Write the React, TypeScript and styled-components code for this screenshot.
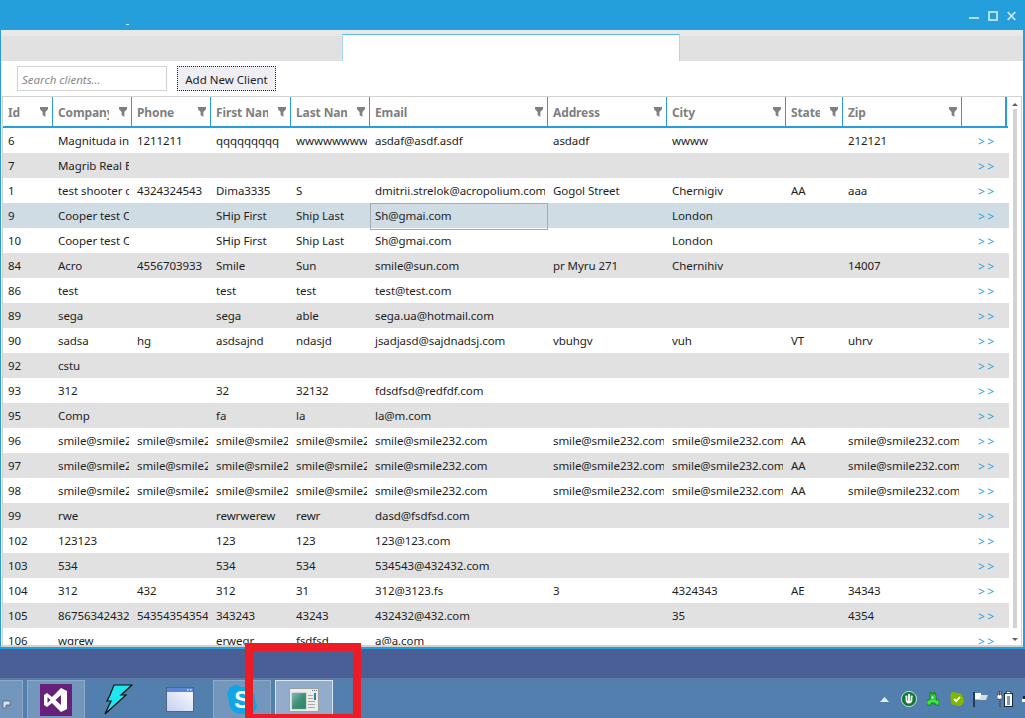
import React from 'react'
import styled, { createGlobalStyle } from 'styled-components'

const GlobalStyle = createGlobalStyle`
  html, body { margin: 0; padding: 0; overflow: hidden; }
  body { font-family: "Noto Sans", "Open Sans", "Liberation Sans", sans-serif; }
`

const COLUMNS = '50px 79px 79px 80px 79px 178px 119px 119px 57px 119px 47px'
const HEADER_COLUMNS = '50px 79px 79px 80px 79px 178px 119px 119px 57px 119px 45px'
const BLUE = '#259fdb'

const Desktop = styled.div`
  position: relative;
  width: 1025px;
  height: 718px;
  display: flex;
  flex-direction: column;
  overflow: hidden;
  background: #4a5f96;
`

const Window = styled.div`
  height: 649px;
  flex: none;
  display: flex;
  flex-direction: column;
  box-sizing: border-box;
  background: ${BLUE};
  padding: 0 2px 2px 1px;
`

const TitleBar = styled.div`
  height: 30px;
  flex: none;
  box-sizing: border-box;
  position: relative;
  display: flex;
  justify-content: flex-end;
  align-items: center;
  gap: 9px;
  padding: 2px 7px 0 0;
`

const TitleMark = styled.span`
  position: absolute;
  left: 125px;
  top: 24px;
  width: 3px;
  height: 1px;
  background: #d8eefa;
`

const Client = styled.div`
  flex: 1;
  min-height: 0;
  display: flex;
  flex-direction: column;
  background: #fff;
  border-bottom: 2px solid #d2d2d2;
`

const TabStrip = styled.div`
  height: 31px;
  flex: none;
  display: flex;
  padding-top: 4px;
  box-sizing: border-box;
  background: linear-gradient(#e8e8e8 0, #e8e8e8 6px, #e1e1e1 6px);
`

const ActiveTab = styled.div`
  width: 336px;
  margin-left: 341px;
  background: #fff;
  border-top: 1px solid #62b9e5;
  border-left: 1px solid #a8d8ef;
  border-right: 1px solid #a8d8ef;
`

const SearchRow = styled.div`
  height: 35px;
  flex: none;
  display: flex;
  gap: 10px;
  padding: 5px 0 0 16px;
  box-sizing: border-box;
`

const SearchInput = styled.div`
  width: 150px;
  height: 25px;
  box-sizing: border-box;
  border: 1px solid #d2d2d2;
  padding-left: 4px;
  font-size: 11.5px;
  font-style: italic;
  line-height: 25px;
  color: #8a8a8a;
`

const AddButton = styled.div`
  width: 99px;
  height: 25px;
  box-sizing: border-box;
  border: 1px dotted #222;
  background: #eeeef3;
  font-size: 11.5px;
  line-height: 25px;
  text-align: center;
  color: #222;
`

const GridArea = styled.div`
  flex: 1;
  min-height: 0;
  display: flex;
  margin: 0 1px;
  border-top: 1px solid #d2d2d2;
  border-left: 1px solid #d2d2d2;
  border-right: 1px solid #d2d2d2;
`

const Table = styled.div`
  width: 1006px;
  flex: none;
  overflow: hidden;
`

const HeaderRow = styled.div`
  display: grid;
  grid-template-columns: ${HEADER_COLUMNS};
  width: 1005px;
  box-sizing: border-box;
  height: 31px;
  border-bottom: 2px solid ${BLUE};
`

const HeaderCell = styled.div<{ $last?: boolean }>`
  position: relative;
  box-sizing: border-box;
  border-right: ${p => (p.$last ? 2 : 1)}px solid ${BLUE};
  padding: 7px 0 0 5px;
  font-size: 12px;
  font-weight: 700;
  letter-spacing: -0.12px;
  line-height: 17px;
  color: #7f7f7f;
`

const HeaderLabel = styled.div`
  margin-right: 22px;
  white-space: nowrap;
  overflow: hidden;
`

const FilterIcon = styled.svg`
  position: absolute;
  right: 4px;
  top: 10px;
  width: 8px;
  height: 10px;
`

const Row = styled.div<{ $tone: 'plain' | 'alt' | 'selected' }>`
  display: grid;
  grid-template-columns: ${COLUMNS};
  height: 25px;
  background: ${p => (p.$tone === 'alt' ? '#e1e1e1' : p.$tone === 'selected' ? '#d0dce4' : '#fff')};
`

const Cell = styled.div<{ $focused?: boolean }>`
  box-sizing: border-box;
  padding-left: ${p => (p.$focused ? 4 : 5)}px;
  margin-right: ${p => (p.$focused ? 0 : 3)}px;
  font-size: 11.5px;
  letter-spacing: -0.07px;
  line-height: ${p => (p.$focused ? 23 : 25)}px;
  color: #1e1e1e;
  white-space: nowrap;
  overflow: hidden;
  border: ${p => (p.$focused ? '1px solid #a3adb4' : 'none')};
`

const Arrows = styled.div`
  padding-left: 16px;
  font-size: 12px;
  letter-spacing: 2.5px;
  line-height: 27px;
  color: ${BLUE};
`

const ScrollBar = styled.div`
  width: 12px;
  flex: none;
  display: flex;
  flex-direction: column;
  align-items: center;
`

const ScrollThumb = styled.div`
  flex: 1;
  width: 4px;
  margin: 3px 0 10px;
  background: #d2d2d2;
`

const Arrow = styled.div<{ $down?: boolean }>`
  width: 0;
  height: 0;
  flex: none;
  margin-top: ${p => (p.$down ? 0 : 6)}px;
  margin-bottom: ${p => (p.$down ? 4 : 0)}px;
  border-left: 3px solid transparent;
  border-right: 3px solid transparent;
  border-bottom: ${p => (p.$down ? 'none' : '3px solid #606060')};
  border-top: ${p => (p.$down ? '3px solid #606060' : 'none')};
`

const Wallpaper = styled.div`
  height: 29px;
  flex: none;
`

const Taskbar = styled.div`
  flex: 1;
  display: flex;
  align-items: flex-start;
  position: relative;
  padding-top: 1px;
  box-sizing: border-box;
  background: #537fae;
  border-top: 1px solid #5a78a6;
`

const Tile = styled.div<{ $active?: boolean; $width?: number; $ml?: number }>`
  width: ${p => p.$width ?? 58}px;
  margin-left: ${p => p.$ml ?? 0}px;
  height: 39px;
  flex: none;
  box-sizing: border-box;
  display: flex;
  align-items: center;
  justify-content: center;
  position: relative;
  overflow: hidden;
  border: 1px solid ${p => (p.$active ? '#dbe5ef' : '#8dabc8')};
  background: ${p => (p.$active ? '#93acc9' : '#7397bc')};
`

const EdgeGlyph = styled.svg`
  position: absolute;
  left: 0;
  bottom: 8px;
`

const PlainTask = styled.div<{ $width: number }>`
  width: ${p => p.$width}px;
  height: 39px;
  flex: none;
  display: flex;
  align-items: center;
  justify-content: center;
`

const Tray = styled.div`
  position: absolute;
  right: 0;
  top: 12px;
  display: flex;
  align-items: center;
`

const TrayIcon = styled.svg<{ $ml: number }>`
  flex: none;
  display: block;
  margin-left: ${p => p.$ml}px;
`

const Highlight = styled.div`
  position: absolute;
  left: 245px;
  top: 643px;
  width: 116px;
  height: 75px;
  box-sizing: border-box;
  border: 8px solid #ed1c24;
  border-bottom-width: 4px;
`

const headers = ['Id', 'Company', 'Phone', 'First Name', 'Last Name', 'Email', 'Address', 'City', 'State', 'Zip', '']

const s = 'smile@smile232.com'
const rows: string[][] = [
  ['6', 'Magnituda inc', '1211211', 'qqqqqqqqq', 'wwwwwwwwww', 'asdaf@asdf.asdf', 'asdadf', 'wwww', '', '212121'],
  ['7', 'Magrib Real Estate', '', '', '', '', '', '', '', ''],
  ['1', 'test shooter co', '4324324543', 'Dima3335', 'S', 'dmitrii.strelok@acropolium.com', 'Gogol Street', 'Chernigiv', 'AA', 'aaa'],
  ['9', 'Cooper test Co', '', 'SHip First', 'Ship Last', 'Sh@gmai.com', '', 'London', '', ''],
  ['10', 'Cooper test Co', '', 'SHip First', 'Ship Last', 'Sh@gmai.com', '', 'London', '', ''],
  ['84', 'Acro', '4556703933', 'Smile', 'Sun', 'smile@sun.com', 'pr Myru 271', 'Chernihiv', '', '14007'],
  ['86', 'test', '', 'test', 'test', 'test@test.com', '', '', '', ''],
  ['89', 'sega', '', 'sega', 'able', 'sega.ua@hotmail.com', '', '', '', ''],
  ['90', 'sadsa', 'hg', 'asdsajnd', 'ndasjd', 'jsadjasd@sajdnadsj.com', 'vbuhgv', 'vuh', 'VT', 'uhrv'],
  ['92', 'cstu', '', '', '', '', '', '', '', ''],
  ['93', '312', '', '32', '32132', 'fdsdfsd@redfdf.com', '', '', '', ''],
  ['95', 'Comp', '', 'fa', 'la', 'la@m.com', '', '', '', ''],
  ['96', s, s, s, s, s, s, s, 'AA', s],
  ['97', s, s, s, s, s, s, s, 'AA', s],
  ['98', s, s, s, s, s, s, s, 'AA', s],
  ['99', 'rwe', '', 'rewrwerew', 'rewr', 'dasd@fsdfsd.com', '', '', '', ''],
  ['102', '123123', '', '123', '123', '123@123.com', '', '', '', ''],
  ['103', '534', '', '534', '534', '534543@432432.com', '', '', '', ''],
  ['104', '312', '432', '312', '31', '312@3123.fs', '3', '4324343', 'AE', '34343'],
  ['105', '86756342432', '54354354354', '343243', '43243', '432432@432.com', '', '35', '', '4354'],
  ['106', 'wqrew', '', 'erwegr', 'fsdfsd', 'a@a.com', '', '', '', ''],
]

const SELECTED = 3

function toneOf(i: number): 'plain' | 'alt' | 'selected' {
  if (i === SELECTED) return 'selected'
  return i % 2 === 1 ? 'alt' : 'plain'
}

export default function App() {
  return (
    <Desktop>
      <GlobalStyle />
      <Window>
        <TitleBar>
          <TitleMark />
          <svg width="10" height="10" viewBox="0 0 10 10">
            <rect x="0" y="6" width="10" height="2" fill="#b5def4" />
          </svg>
          <svg width="10" height="10" viewBox="0 0 10 10">
            <rect x="1" y="1" width="8" height="8" fill="none" stroke="#b5def4" strokeWidth="2" />
          </svg>
          <svg width="9" height="10" viewBox="0 0 9 10">
            <path d="M0.7 1l7.6 8M8.3 1L0.7 9" stroke="#cdeafa" strokeWidth="1.7" />
          </svg>
        </TitleBar>
        <Client>
          <TabStrip>
            <ActiveTab />
          </TabStrip>
          <SearchRow>
            <SearchInput>Search clients...</SearchInput>
            <AddButton>Add New Client</AddButton>
          </SearchRow>
          <GridArea>
            <Table>
              <HeaderRow>
                {headers.map((h, i) => (
                  <HeaderCell key={i} $last={!h}>
                    <HeaderLabel>{h}</HeaderLabel>
                    {h && (
                      <FilterIcon viewBox="0 0 8 10">
                        <path d="M0 0h8v2.2L5.4 5v5L2.6 8V5L0 2.2z" fill="#808080" />
                      </FilterIcon>
                    )}
                  </HeaderCell>
                ))}
              </HeaderRow>
              {rows.map((r, i) => (
                <Row key={i} $tone={toneOf(i)}>
                  {r.map((v, j) => (
                    <Cell key={j} $focused={i === SELECTED && j === 5}>
                      {v}
                    </Cell>
                  ))}
                  <Arrows>{'>>'}</Arrows>
                </Row>
              ))}
            </Table>
            <ScrollBar>
              <Arrow />
              <ScrollThumb />
              <Arrow $down />
            </ScrollBar>
          </GridArea>
        </Client>
      </Window>
      <Wallpaper />
      <Taskbar>
        <Tile $width={24} $ml={-1}>
          <EdgeGlyph width="11" height="10" viewBox="0 0 11 10">
            <path d="M3 1h7v4H6v3H3z" fill="#dfe3e8" stroke="#4d5f73" strokeWidth="0.8" />
          </EdgeGlyph>
        </Tile>
        <Tile $ml={4}>
          <svg width="32" height="32" viewBox="0 0 32 32">
            <rect width="32" height="32" fill="#68217a" />
            <path d="M21 4l6 3v18l-6 3-9-9-5 4-3-2V11l3-2 5 4zM7.5 13v6l3-3zM21 11l-5.500 5 5.500 5z" fill="#fff" fillRule="evenodd" />
          </svg>
        </Tile>
        <PlainTask $width={66}>
          <svg width="30" height="31" viewBox="0 0 30 31">
            <path d="M11 1h18L18 11h5L2 30l6-13H4l3-6z" fill="#1fe6ef" stroke="#0c0c0c" strokeWidth="1.2" />
          </svg>
        </PlainTask>
        <PlainTask $width={58}>
          <svg width="28" height="25" viewBox="0 0 28 25">
            <defs>
              <linearGradient id="winBody" x1="1" y1="0" x2="0" y2="1">
                <stop offset="0" stopColor="#ffffff" />
                <stop offset="1" stopColor="#c2cef0" />
              </linearGradient>
            </defs>
            <rect x="0.5" y="0.5" width="27" height="24" fill="url(#winBody)" stroke="#52667f" />
            <rect x="1" y="1" width="26" height="4" fill="#5b83d6" />
            <rect x="21" y="2" width="1.500" height="1.500" fill="#d9e4fa" />
            <rect x="24" y="2" width="1.500" height="1.500" fill="#d9e4fa" />
          </svg>
        </PlainTask>
        <Tile $ml={4}>
          <svg width="30" height="30" viewBox="0 0 30 30">
            <path d="M8 0a8 8 0 0 1 6 2c9-1 15 6 14 13 3 5 2 10-2 13-3 2-7 2-10 1C7 30 1 23 2 15-2 8 2 1 8 0z" fill="#12a5e6" />
            <text x="15" y="23" textAnchor="middle" fontSize="23" fontWeight="700" fill="#fff" fontFamily="Liberation Sans">S</text>
          </svg>
        </Tile>
        <Tile $active $ml={4}>
          <svg width="30" height="24" viewBox="0 0 30 24">
            <defs>
              <linearGradient id="appPic" x1="0" y1="0" x2="1" y2="1">
                <stop offset="0" stopColor="#80b8cc" />
                <stop offset="0.5" stopColor="#3f9270" />
                <stop offset="1" stopColor="#2f7f70" />
              </linearGradient>
            </defs>
            <rect x="0.5" y="0.5" width="29" height="23" fill="#eceeea" stroke="#9aa0a3" />
            <rect x="3" y="5" width="14" height="16" fill="url(#appPic)" stroke="#8d9598" strokeWidth="0.5" />
            <rect x="19" y="7" width="5" height="1" fill="#a9a9a9" />
            <rect x="19" y="10" width="5" height="1" fill="#a9a9a9" />
            <rect x="19" y="13" width="7" height="1" fill="#a9a9a9" />
            <rect x="19" y="16" width="7" height="1" fill="#a9a9a9" />
            <rect x="19" y="19" width="7" height="1" fill="#a9a9a9" />
            <rect x="25" y="5" width="2" height="7" fill="#2f7fa8" />
            <rect x="23" y="2" width="1" height="1" fill="#666" />
            <rect x="25" y="2" width="1" height="1" fill="#666" />
            <rect x="27" y="2" width="1" height="1" fill="#666" />
          </svg>
        </Tile>
        <Tray>
          <TrayIcon $ml={0} width="9" height="5" viewBox="0 0 9 5">
            <path d="M4.5 0L9 5H0z" fill="#e6edf5" />
          </TrayIcon>
          <TrayIcon $ml={12} width="16" height="16" viewBox="0 0 16 16">
            <circle cx="8" cy="8" r="7.6" fill="#0f7a3a" stroke="#e8f0ea" strokeWidth="0.8" />
            <path d="M4.500 5l1 .5v3.500a2.500 2.500 0 0 0 5 0V5.500l1-.5M8 3v8" fill="none" stroke="#fff" strokeWidth="1.800" />
          </TrayIcon>
          <TrayIcon $ml={10} width="12" height="16" viewBox="0 0 12 16">
            <path d="M3 1h1v2h3V1h1v3h1v5h3v5H8v-2H4v2H0V9h3z" fill="#3be83f" stroke="#0c7a18" strokeWidth="0.8" />
            <rect x="4" y="5" width="3" height="3" fill="#e8ffe8" stroke="#0c7a18" strokeWidth="0.6" />
          </TrayIcon>
          <TrayIcon $ml={11} width="14" height="14" viewBox="0 0 14 14">
            <path d="M3 0c2 0 3 1 4 1 4 0 6 2 6 5 2 3 0 8-4 8-2 0-3-1-4-1-3 0-5-2-4-5C0 5 0 0 3 0z" fill="#7fb800" />
            <path d="M4 7l2.200 2.200L10 5" fill="none" stroke="#fff" strokeWidth="1.800" />
          </TrayIcon>
          <TrayIcon $ml={9} width="16" height="15" viewBox="0 0 16 15">
            <path d="M1 0v15" stroke="#14233f" strokeWidth="1.500" />
            <path d="M2 1h6v6.500H2z" fill="#fff" />
            <path d="M8 3h7l-2 5H6z" fill="#dcdcdc" />
          </TrayIcon>
          <TrayIcon $ml={8} width="16" height="16" viewBox="0 0 16 16">
            <path d="M1 0h1v4h1V0h1v4h1v4H3.500v8h-1V8H0V4h1z" fill="#fff" stroke="#14233f" strokeWidth="0.600" />
            <rect x="7.500" y="2.500" width="8" height="13" fill="#fff" stroke="#14233f" />
            <rect x="9.500" y="0.500" width="4" height="2" fill="#fff" stroke="#14233f" strokeWidth="0.600" />
            <rect x="10" y="5" width="3" height="9" fill="#7b99ba" />
          </TrayIcon>
          <TrayIcon $ml={9} width="3" height="6" viewBox="0 0 3 6">
            <rect x="0" y="3" width="3" height="3" fill="#fff" />
            <rect x="1" y="0" width="2" height="3" fill="#14233f" />
          </TrayIcon>
        </Tray>
      </Taskbar>
      <Highlight />
    </Desktop>
  )
}
